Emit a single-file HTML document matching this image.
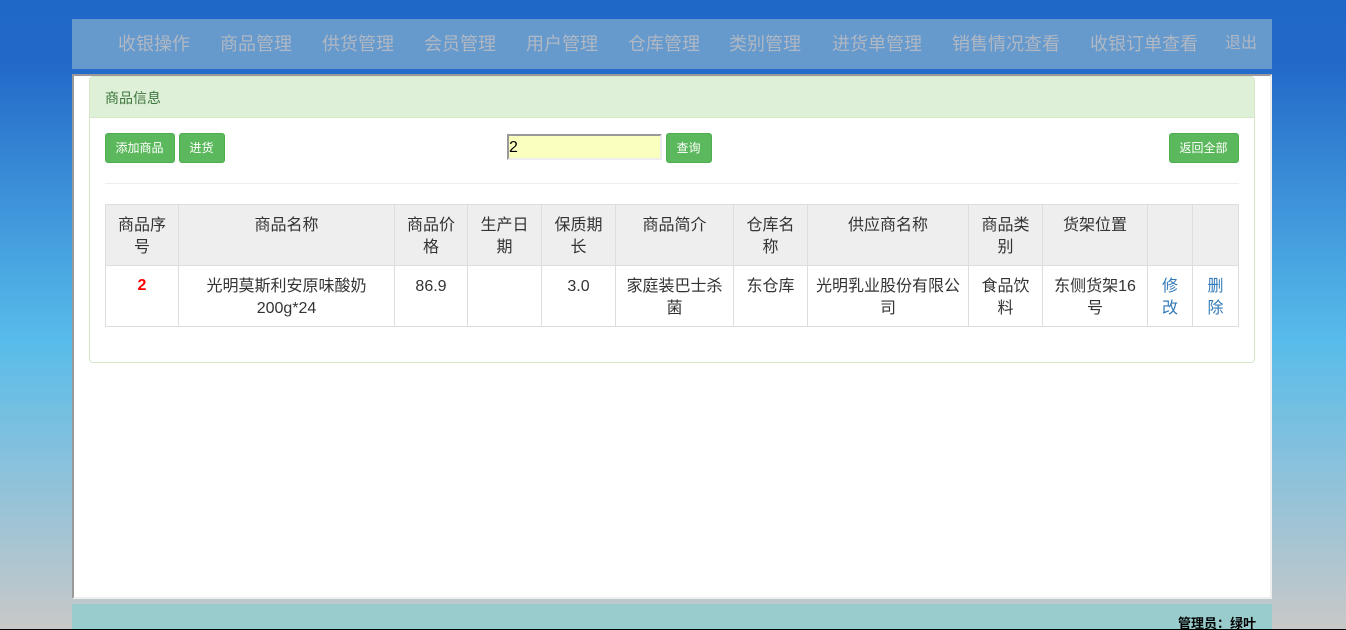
<!DOCTYPE html>
<html lang="zh">
<head>
<meta charset="utf-8">
<title>商品信息</title>
<style>
*{box-sizing:border-box}
html,body{margin:0;padding:0;width:1346px;height:630px;overflow:hidden}
body{position:relative;font-family:"Liberation Sans","WenQuanYi Zen Hei","Noto Sans CJK SC",sans-serif;font-size:16px;color:#333;
background:linear-gradient(to bottom,#2068c8 0,#2268c8 60px,#58bcea 340px,#c8c8c8 629px)}
.abs{position:absolute}
.nav{left:72px;top:19px;width:1200px;height:50px;background:#6699cc}
.nav span{position:absolute;top:13px;font-size:18px;line-height:24px;color:#b0b8c4;white-space:nowrap}
.main{left:72px;top:74px;width:1200px;height:525px;background:#fff;border-style:solid;border-width:2px;border-color:#999 #eee #eee #999}
.panel{left:89px;top:76px;width:1166px;height:287px;background:#fff;border:1px solid #d6e9c6;border-radius:4px}
.ph{left:90px;top:77px;width:1164px;height:41px;background:#dff0d8;border-bottom:1px solid #d6e9c6;border-radius:3px 3px 0 0;color:#3c763d;font-size:14px;line-height:42px;padding-left:15px}
.btn{position:absolute;top:133px;height:30px;background:#5cb85c;border:1px solid #4cae4c;border-radius:3px;color:#fff;font-size:12px;line-height:28px;text-align:center;text-indent:-1px}
.inp{left:507px;top:134px;width:155px;height:26px;background:#faffbd;border-style:solid;border-width:2px;border-color:#999 #eee #eee #999;color:#000;font-size:16px;line-height:24px;padding-left:0}
.hr{left:105px;top:183px;width:1134px;height:1px;background:#eee}
table{position:absolute;left:105px;top:204px;width:1133px;table-layout:fixed;border-collapse:collapse}
td,th{border:1px solid #ddd;padding:10px 6px 0;height:61px;line-height:22px;text-align:center;vertical-align:top;font-weight:normal;font-size:16px;overflow:hidden}
th{background:#eee}
td.l{padding-left:13px;padding-right:13px}
a{color:#337ab7;text-decoration:none}
.foot{left:72px;top:604px;width:1200px;height:26px;background:#9cc}
.admin{left:1178px;top:615px;font-size:13px;line-height:18px;font-weight:bold;color:#000;white-space:nowrap}
.line{left:0;top:629px;width:1346px;height:1px;background:#000}
</style>
</head>
<body>
<div class="abs nav">
<span style="left:46px">收银操作</span>
<span style="left:148px">商品管理</span>
<span style="left:250px">供货管理</span>
<span style="left:352px">会员管理</span>
<span style="left:454px">用户管理</span>
<span style="left:556px">仓库管理</span>
<span style="left:657px">类别管理</span>
<span style="left:760px">进货单管理</span>
<span style="left:880px">销售情况查看</span>
<span style="left:1018px">收银订单查看</span>
<span style="left:1153px;font-size:16px">退出</span>
</div>
<div class="abs main"></div>
<div class="abs panel"></div>
<div class="abs ph">商品信息</div>
<div class="btn" style="left:105px;width:70px">添加商品</div>
<div class="btn" style="left:179px;width:46px">进货</div>
<div class="abs inp">2</div>
<div class="btn" style="left:666px;width:46px">查询</div>
<div class="btn" style="left:1169px;width:70px">返回全部</div>
<div class="abs hr"></div>
<table>
<colgroup>
<col style="width:73px"><col style="width:216px"><col style="width:73px"><col style="width:74px"><col style="width:74px"><col style="width:118px"><col style="width:74px"><col style="width:161px"><col style="width:74px"><col style="width:105px"><col style="width:45px"><col style="width:46px">
</colgroup>
<tr><th>商品序号</th><th>商品名称</th><th>商品价格</th><th>生产日期</th><th>保质期长</th><th>商品简介</th><th>仓库名称</th><th>供应商名称</th><th>商品类别</th><th>货架位置</th><th></th><th></th></tr>
<tr><td style="color:#f00;font-weight:bold;padding-top:9px">2</td><td>光明莫斯利安原味酸奶200g*24</td><td>86.9</td><td></td><td>3.0</td><td>家庭装巴士杀菌</td><td>东仓库</td><td>光明乳业股份有限公司</td><td>食品饮料</td><td>东侧货架16号</td><td class="l"><a href="#">修改</a></td><td class="l"><a href="#">删除</a></td></tr>
</table>
<div class="abs foot"></div>
<div class="abs admin">管理员：绿叶</div>
<div class="abs line"></div>
</body>
</html>
